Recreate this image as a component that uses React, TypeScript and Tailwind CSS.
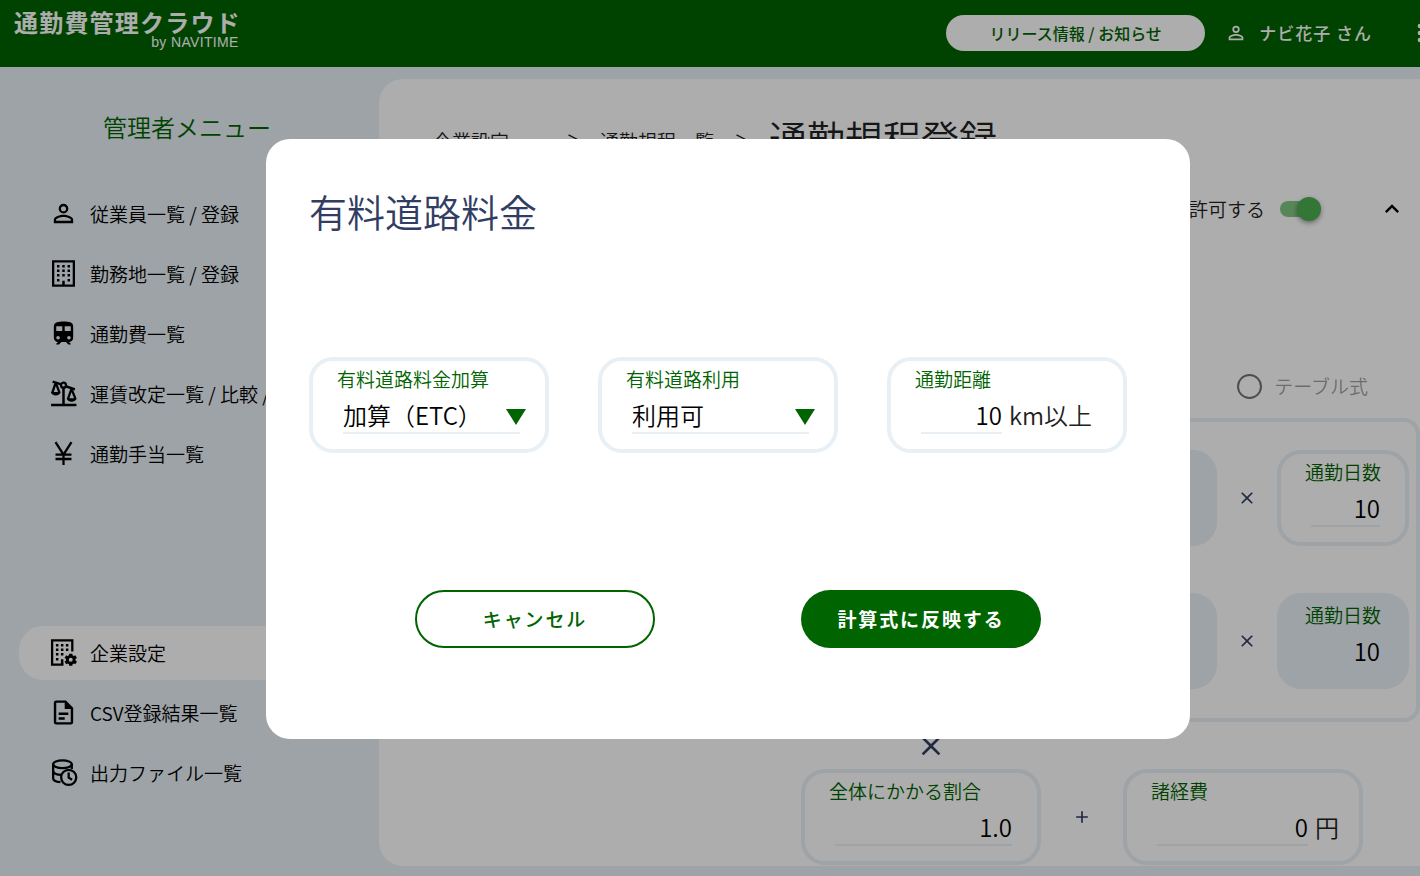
import type { ReactNode } from 'react'

function MdiIcon({ path, className = 'size-[29px]' }: { path: string; className?: string }) {
    return (
        <svg viewBox="0 0 24 24" fill="currentColor" className={`shrink-0 ${className}`} aria-hidden="true">
            <path d={path} />
        </svg>
    )
}

const ACCOUNT =
    'M12,4A4,4 0 0,1 16,8A4,4 0 0,1 12,12A4,4 0 0,1 8,8A4,4 0 0,1 12,4M12,5.9A2.1,2.1 0 0,0 9.9,8A2.1,2.1 0 0,0 12,10.1A2.1,2.1 0 0,0 14.1,8A2.1,2.1 0 0,0 12,5.9M12,13C14.67,13 20,14.33 20,17V20H4V17C4,14.33 9.33,13 12,13M12,14.9C9.03,14.9 5.9,16.36 5.9,17V18.1H18.1V17C18.1,16.36 14.97,14.9 12,14.9Z'
const TRAIN =
    'M12,2C8,2 4,2.5 4,6V15.5A3.5,3.5 0 0,0 7.5,19L6,20.5V21H8.23L10.23,19H14L16,21H18V20.5L16.5,19A3.5,3.5 0 0,0 20,15.5V6C20,2.5 16.42,2 12,2M7.5,17A1.5,1.5 0 0,1 6,15.5A1.5,1.5 0 0,1 7.5,14A1.5,1.5 0 0,1 9,15.5A1.5,1.5 0 0,1 7.5,17M11,10H6V6H11V10M13,10V6H18V10H13M16.5,17A1.5,1.5 0 0,1 15,15.5A1.5,1.5 0 0,1 16.5,14A1.5,1.5 0 0,1 18,15.5A1.5,1.5 0 0,1 16.5,17Z'
const FILE =
    'M6,2A2,2 0 0,0 4,4V20A2,2 0 0,0 6,22H18A2,2 0 0,0 20,20V8L14,2H6M6,4H13V9H18V20H6V4M8,12V14H16V12H8M8,16V18H13V16H8Z'
const CHEVRON_UP = 'M7.41,15.41L12,10.83L16.59,15.41L18,14L12,8L6,14L7.41,15.41Z'
const DOTS =
    'M12,16A2,2 0 0,1 14,18A2,2 0 0,1 12,20A2,2 0 0,1 10,18A2,2 0 0,1 12,16M12,10A2,2 0 0,1 14,12A2,2 0 0,1 12,14A2,2 0 0,1 10,12A2,2 0 0,1 12,10M12,4A2,2 0 0,1 14,6A2,2 0 0,1 12,8A2,2 0 0,1 10,6A2,2 0 0,1 12,4Z'
const TIMES =
    'M19,6.41L17.59,5L12,10.59L6.41,5L5,6.41L10.59,12L5,17.59L6.41,19L12,13.41L17.59,19L19,17.59L13.41,12L19,6.41Z'
const PLUS = 'M19,13H13V19H11V13H5V11H11V5H13V11H19V13Z'

function LineIcon({ children }: { children: ReactNode }) {
    return (
        <svg
            viewBox="0 0 28 28"
            fill="none"
            stroke="currentColor"
            strokeWidth="2.2"
            className="size-[29px] shrink-0"
            aria-hidden="true"
        >
            {children}
        </svg>
    )
}

function BuildingIcon() {
    return (
        <LineIcon>
            <path d="M4 2.3H24V25.7H4Z" />
            <path
                d="M7.7 7H10.1M12.8 7H15.2M17.9 7H20.3M7.7 11.3H10.1M12.8 11.3H15.2M17.9 11.3H20.3M7.7 15.6H10.1M12.8 15.6H15.2M17.9 15.6H20.3M7.7 20.5H10.1M17.9 20.5H20.3M14 25V21"
                strokeWidth="2.4"
            />
        </LineIcon>
    )
}

function BuildingCogIcon() {
    return (
        <LineIcon>
            <path d="M22.5 13V2.3H3V25.7H14" />
            <path
                d="M6.7 7H9.1M11.5 7H13.9M16.3 7H18.7M6.7 11.3H9.1M11.5 11.3H13.9M16.3 11.3H18.7M6.7 15.6H9.1M11.5 15.6H13.9M6.7 20.5H9.1M12.7 25V20.5"
                strokeWidth="2.4"
            />
            <circle cx="21" cy="21" r="3.3" strokeWidth="2.8" />
            <path
                d="M21 17.5V15.3M21 26.7V24.5M24.5 19L26.2 18M15.8 24L17.5 23M24.5 23L26.2 24M15.8 18L17.5 19"
                strokeWidth="3.2"
            />
        </LineIcon>
    )
}

function ScaleIcon() {
    return (
        <LineIcon>
            <path d="M2 25H26.5M14 8V25M3.5 2.5L11.8 5.2M16.2 7L25 10" strokeWidth="2.4" />
            <circle cx="14" cy="6" r="2.4" />
            <path d="M6.5 3.5L3.3 13M6.5 3.5L10 13M21.7 9.5L18.4 19M21.7 9.5L25.5 19" />
            <path
                d="M1.8 12.5H11.2C10.8 17 2.4 17 1.8 12.5ZM17 18.5H26.7C26.3 23 17.4 23 17 18.5Z"
                fill="currentColor"
                stroke="none"
            />
        </LineIcon>
    )
}

function YenIcon() {
    return (
        <LineIcon>
            <path d="M6.3 3L14 15L21.7 3M14 14.5V25M6.3 15H21.7M6.3 19.3H21.7" />
        </LineIcon>
    )
}

function DatabaseClockIcon() {
    return (
        <LineIcon>
            <ellipse cx="13" cy="6" rx="9" ry="3.8" />
            <path d="M4 6V19.5C4 21.5 7 23 11 23.3M22 6V10.5M4 12.5C4.5 15 8 16.2 12 16.3" />
            <circle cx="19" cy="18.7" r="7.3" />
            <path d="M19 14V19L22.3 21" />
        </LineIcon>
    )
}

function NavItem({ icon, text, active = false }: { icon: ReactNode; text: string; active?: boolean }) {
    return (
        <a
            href="#"
            className={`flex h-[54px] items-center gap-3 whitespace-nowrap rounded-l-3xl pl-[30px] text-[19px] text-black ${active ? 'bg-white' : ''}`}
        >
            <span className="pb-0.5">{icon}</span>
            {text}
        </a>
    )
}

interface FieldProps {
    label: string
    width?: string
    inset?: string
    disabled?: boolean
    children?: ReactNode
}

function Field({ label, width = 'w-60', inset = 'pr-[25px]', disabled = false, children }: FieldProps) {
    return (
        <label
            className={`flex h-24 shrink-0 flex-col rounded-3xl border-4 border-[#e8f0f5] pl-6 pt-1 text-2xl ${inset} ${width} ${disabled ? 'bg-[#e8f0f5]' : ''}`}
        >
            <span className="whitespace-nowrap text-[19px] leading-7 text-[#006400]">{label}</span>
            <span className="mt-1 flex items-start gap-[7px] whitespace-nowrap pl-1.5 leading-9 text-[#212121]">
                {children}
            </span>
        </label>
    )
}

function NumberInput({ value, disabled = false }: { value: string; disabled?: boolean }) {
    return (
        <input
            type="text"
            inputMode="decimal"
            defaultValue={value}
            disabled={disabled}
            className="h-[37px] w-0 min-w-0 grow border-b-2 border-[#e8f0f5] bg-transparent text-right text-black"
        />
    )
}

function SelectInput({ value }: { value: string }) {
    return (
        <span className="relative flex grow">
            <select className="h-[37px] grow appearance-none border-b-2 border-[#e8f0f5] bg-transparent text-black">
                <option>{value}</option>
            </select>
            <svg
                viewBox="0 0 20 16"
                className="pointer-events-none absolute -right-1.5 top-3 h-4 w-5 fill-[#006400]"
                aria-hidden="true"
            >
                <path d="M0 0H20L10 16Z" />
            </svg>
        </span>
    )
}

function FormulaRow({ disabled = false }: { disabled?: boolean }) {
    return (
        <div className="flex items-center justify-end">
            <Field label="" disabled />
            <span className="flex w-[60px] justify-center text-[#323d63]">
                <MdiIcon path={TIMES} className="size-5" />
            </span>
            <Field label="通勤日数" width="w-[132px]" disabled={disabled}>
                <NumberInput value="10" disabled={disabled} />
            </Field>
        </div>
    )
}

function Header() {
    return (
        <header className="flex h-[67px] shrink-0 items-start justify-between bg-[#006400] pl-3.5 pr-[22px] text-white">
            <div className="flex flex-col items-end pt-2.5">
                <span className="text-2xl font-bold leading-6 tracking-wider">通勤費管理クラウド</span>
                <span className="pr-0.5 font-['Liberation_Sans',sans-serif] text-sm font-normal leading-4 tracking-wide">
                    by NAVITIME
                </span>
            </div>
            <div className="flex items-center pt-[15px]">
                <button type="button" className="h-9 w-[259px] rounded-full bg-white font-medium text-[#006400]">
                    リリース情報 / お知らせ
                </button>
                <MdiIcon path={ACCOUNT} className="ml-5 size-[22px]" />
                <span className="ml-3 text-[17px] font-medium tracking-[1px]">ナビ花子 さん</span>
                <button type="button" aria-label="メニュー" className="ml-[34px]">
                    <MdiIcon path={DOTS} className="size-7" />
                </button>
            </div>
        </header>
    )
}

function Sidebar() {
    return (
        <aside className="w-[379px] shrink-0 pl-[19px] pt-8">
            <h2 className="pr-6 text-center text-2xl text-[#006400]">管理者メニュー</h2>
            <nav className="mt-11 flex flex-col gap-1.5">
                <NavItem icon={<MdiIcon path={ACCOUNT} />} text="従業員一覧 / 登録" />
                <NavItem icon={<BuildingIcon />} text="勤務地一覧 / 登録" />
                <NavItem icon={<MdiIcon path={TRAIN} />} text="通勤費一覧" />
                <NavItem icon={<ScaleIcon />} text="運賃改定一覧 / 比較 /" />
                <NavItem icon={<YenIcon />} text="通勤手当一覧" />
            </nav>
            <nav className="mt-[145px] flex flex-col gap-1.5">
                <NavItem icon={<BuildingCogIcon />} text="企業設定" active />
                <NavItem icon={<MdiIcon path={FILE} />} text="CSV登録結果一覧" />
                <NavItem icon={<DatabaseClockIcon />} text="出力ファイル一覧" />
            </nav>
        </aside>
    )
}

function RuleForm() {
    return (
        <main className="flex min-w-0 grow flex-col overflow-hidden rounded-l-3xl bg-white pl-[54px] pr-9 pt-[34px] text-[19px]">
            <div className="flex items-end whitespace-nowrap leading-10 text-[#212121]">
                <a href="#">企業設定</a>
                <span className="ml-[57px]">＞</span>
                <a href="#" className="ml-[15px]">
                    通勤規程一覧
                </a>
                <span className="ml-5">＞</span>
                <h1 className="ml-4 text-[38px] leading-[48px]">通勤規程登録</h1>
            </div>
            <div className="mt-[34px] flex h-7 shrink-0 items-center justify-end pr-3.5">
                <label className="flex items-center gap-[15px] text-[#212121]">
                    許可する
                    <input
                        type="checkbox"
                        defaultChecked
                        className="relative h-6 w-[41px] appearance-none before:absolute before:left-0 before:top-1 before:h-4 before:w-[34px] before:rounded-full before:bg-[#4caf50]/70 after:absolute after:right-0 after:top-0 after:size-6 after:rounded-full after:bg-[#4caf50] after:shadow-[0_2px_5px_rgba(0,0,0,0.4)]"
                    />
                </label>
                <button type="button" aria-label="閉じる" className="ml-[57px] text-black">
                    <MdiIcon path={CHEVRON_UP} className="size-7" />
                </button>
            </div>
            <label className="mt-[147px] flex h-8 shrink-0 items-center gap-3 self-end pr-[52px] text-black/40">
                <input
                    type="radio"
                    disabled
                    className="size-[25px] appearance-none rounded-full border-2 border-black/55"
                />
                テーブル式
            </label>
            <section className="mt-4 flex shrink-0 flex-col gap-[47px] rounded-2xl border-4 border-[#e8f0f5] pb-[29px] pr-[7px] pt-7">
                <FormulaRow />
                <FormulaRow disabled />
            </section>
            <div className="flex h-[47px] shrink-0 items-center pl-[378px] text-[#323d63]">
                <span className="flex w-60 justify-center">
                    <MdiIcon path={TIMES} className="size-8" />
                </span>
            </div>
            <div className="flex items-center pl-[368px]">
                <Field label="全体にかかる割合">
                    <NumberInput value="1.0" />
                </Field>
                <span className="flex w-[82px] justify-center text-[#323d63]">
                    <MdiIcon path={PLUS} className="size-5" />
                </span>
                <Field label="諸経費" inset="pr-5">
                    <NumberInput value="0" />円
                </Field>
            </div>
        </main>
    )
}

function TollDialog() {
    return (
        <div
            role="dialog"
            aria-labelledby="toll-title"
            className="w-[924px] rounded-3xl bg-white px-[43px] pb-[91px] pt-12"
        >
            <h2 id="toll-title" className="text-[38px] leading-[48px] text-[#323d63]">
                有料道路料金
            </h2>
            <div className="mt-[122px] flex gap-[49px]">
                <Field label="有料道路料金加算">
                    <SelectInput value="加算（ETC）" />
                </Field>
                <Field label="有料道路利用">
                    <SelectInput value="利用可" />
                </Field>
                <Field label="通勤距離">
                    <NumberInput value="10" />
                    <span className="pr-1.5">km以上</span>
                </Field>
            </div>
            <div className="mt-[137px] flex justify-center gap-[146px] text-[19px] tracking-widest">
                <button
                    type="button"
                    className="h-[58px] w-60 rounded-full border-2 border-[#006400] font-medium text-[#006400]"
                >
                    キャンセル
                </button>
                <button type="button" className="h-[58px] w-60 rounded-full bg-[#006400] font-bold text-white">
                    計算式に反映する
                </button>
            </div>
        </div>
    )
}

export default function App() {
    return (
        <div lang="ja" className="h-screen overflow-hidden font-['Noto_Sans_CJK_JP',sans-serif] font-[350]">
            <div className="relative flex h-full min-w-[1456px] flex-col bg-[#e8f0f5]">
                <Header />
                <div className="flex min-h-0 grow pb-2.5 pt-3">
                    <Sidebar />
                    <RuleForm />
                </div>
                <div className="absolute inset-0 flex items-center justify-center bg-black/32 pt-0.5">
                    <TollDialog />
                </div>
            </div>
        </div>
    )
}
